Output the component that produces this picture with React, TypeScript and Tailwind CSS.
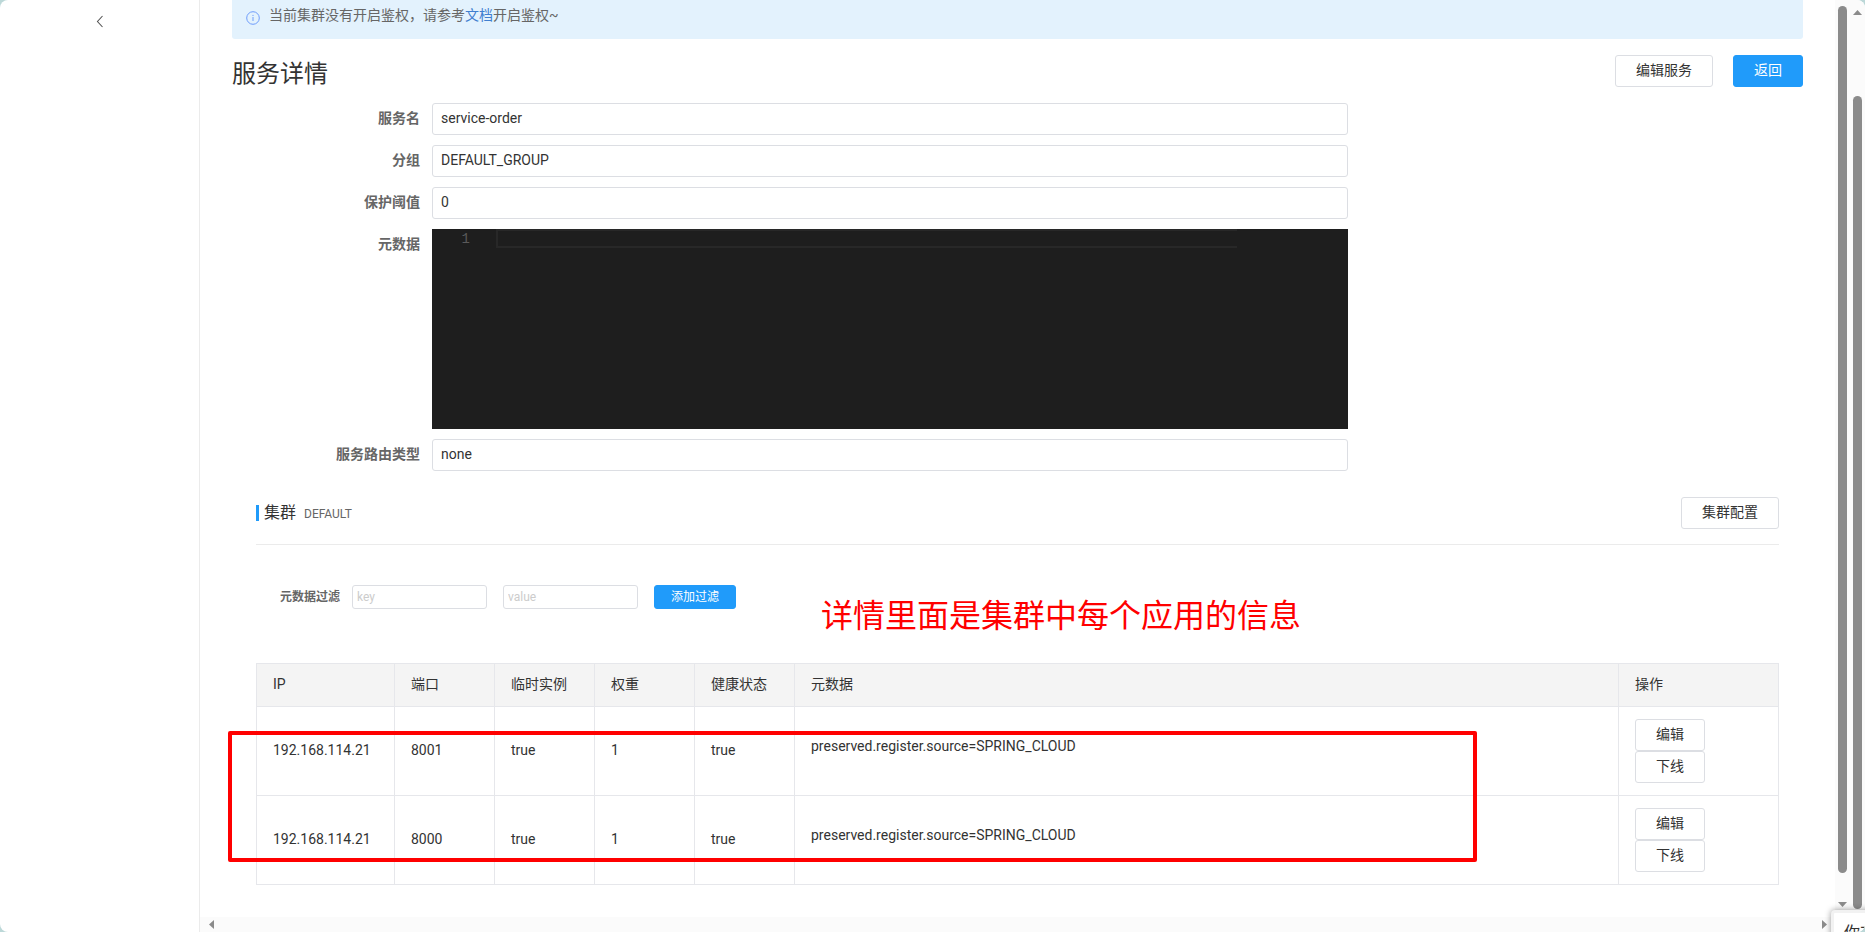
import { useState } from 'react';
import { clsx } from 'clsx';

interface Instance {
  ip: string;
  port: number;
  ephemeral: boolean;
  weight: number;
  healthy: boolean;
  metadata: string;
}

const instances: Instance[] = [
  {
    ip: '192.168.114.21',
    port: 8001,
    ephemeral: true,
    weight: 1,
    healthy: true,
    metadata: 'preserved.register.source=SPRING_CLOUD',
  },
  {
    ip: '192.168.114.21',
    port: 8000,
    ephemeral: true,
    weight: 1,
    healthy: true,
    metadata: 'preserved.register.source=SPRING_CLOUD',
  },
];

const columns = [
  { title: 'IP', width: 'w-[138px]' },
  { title: '端口', width: 'w-[100px]' },
  { title: '临时实例', width: 'w-[100px]' },
  { title: '权重', width: 'w-[100px]' },
  { title: '健康状态', width: 'w-[100px]' },
  { title: '元数据', width: '' },
  { title: '操作', width: 'w-[160px]' },
];

interface ButtonProps {
  children: string;
  primary?: boolean;
  small?: boolean;
}

function Button({ children, primary, small }: ButtonProps) {
  return (
    <button
      type="button"
      className={clsx(
        'block rounded-[3px] border whitespace-nowrap',
        small ? 'h-6 px-4 text-xs' : 'h-8 px-5 pb-0.5 text-sm',
        primary
          ? 'border-[#209bfa] bg-[#209bfa] text-white'
          : 'border-[#dcdee3] bg-white text-[#333]'
      )}
    >
      {children}
    </button>
  );
}

function Field({ id, label, value }: { id: string; label: string; value: string }) {
  return (
    <div className="flex">
      <label
        htmlFor={id}
        className="w-[200px] shrink-0 pr-3 text-right text-sm leading-[30px] font-bold text-[#666]"
      >
        {label}
      </label>
      <input
        id={id}
        readOnly
        defaultValue={value}
        className="h-8 min-w-0 flex-1 rounded-[3px] border border-[#dcdee3] px-2 pb-0.5 text-sm text-[#333] outline-none"
      />
    </div>
  );
}

function Arrow({ direction }: { direction: 'up' | 'down' | 'left' | 'right' }) {
  const points = {
    up: '0,5 9,5 4.5,0',
    down: '0,0 9,0 4.5,5',
    left: '5,0 5,9 0,4.5',
    right: '0,0 0,9 5,4.5',
  };
  const vertical = direction === 'up' || direction === 'down';
  return (
    <svg width={vertical ? 9 : 5} height={vertical ? 5 : 9} className="block fill-[#8b8b8b]">
      <polygon points={points[direction]} />
    </svg>
  );
}

function Sidebar() {
  return (
    <aside className="w-[200px] shrink-0 border-r border-[#ebebeb] pt-[15px]">
      <button type="button" aria-label="返回列表" className="mx-auto block">
        <svg width="8" height="13" viewBox="0 0 8 13" fill="none" className="block">
          <path d="M6.5 1 1.5 6.5l5 5.5" stroke="#555" strokeWidth="1.1" />
        </svg>
      </button>
    </aside>
  );
}

function Notice() {
  return (
    <div className="flex h-[39px] gap-[9px] rounded-b-[3px] bg-[#e3f2fd] pl-[14px] text-sm text-[#666]">
      <svg width="14" height="14" viewBox="0 0 14 14" fill="none" className="mt-[11px]">
        <circle cx="7" cy="7" r="6.3" stroke="#6f9dfb" />
        <path d="M7 6v4M7 3.9v1.1" stroke="#6f9dfb" />
      </svg>
      <p className="leading-[30px]">
        当前集群没有开启鉴权，请参考
        <a href="#auth" className="text-[#3f7fd0]">
          文档
        </a>
        开启鉴权~
      </p>
    </div>
  );
}

function MetadataEditor() {
  return (
    <div className="flex">
      <span className="w-[200px] shrink-0 pr-3 text-right text-sm leading-[30px] font-bold text-[#666]">
        元数据
      </span>
      <div className="flex h-[200px] flex-1 bg-[#1e1e1e]">
        <span className="w-[38px] text-right font-['Liberation_Mono',monospace] text-sm leading-[21px] text-[#5a5a5a]">
          1
        </span>
        <div className="mr-[111px] ml-[26px] h-[19px] flex-1 border-2 border-r-0 border-[#282828]" />
      </div>
    </div>
  );
}

function InstanceTable() {
  const cell = 'border-r border-b border-[#e6e7eb] px-4';
  return (
    <table className="w-full table-fixed border-separate border-spacing-0 border-t border-l border-[#e6e7eb] text-sm text-[#333]">
      <thead className="bg-[#f4f4f4]">
        <tr className="h-[43px]">
          {columns.map((column) => (
            <th key={column.title} className={clsx(cell, column.width, 'pb-0.5 text-left font-normal')}>
              {column.title}
            </th>
          ))}
        </tr>
      </thead>
      <tbody>
        {instances.map((item) => (
          <tr key={item.port} className="h-[89px]">
            <td className={clsx(cell, 'pb-0.5')}>{item.ip}</td>
            <td className={clsx(cell, 'pb-0.5')}>{item.port}</td>
            <td className={clsx(cell, 'pb-0.5')}>{String(item.ephemeral)}</td>
            <td className={clsx(cell, 'pb-0.5')}>{item.weight}</td>
            <td className={clsx(cell, 'pb-0.5')}>{String(item.healthy)}</td>
            <td className={clsx(cell, 'pb-2.5')}>{item.metadata}</td>
            <td className={cell}>
              <Button>编辑</Button>
              <Button>下线</Button>
            </td>
          </tr>
        ))}
      </tbody>
    </table>
  );
}

function Cluster() {
  const [key, setKey] = useState('');
  const [value, setValue] = useState('');
  const filterInput =
    'h-6 w-[135px] rounded-[3px] border border-[#dcdee3] px-1 text-xs text-[#333] outline-none placeholder:text-[#ccc]';

  return (
    <section className="relative mx-6 mt-[26px]">
      <div className="flex items-center border-b border-[#ebebeb] pb-[15px]">
        <span className="h-4 w-[3px] bg-[#209bfa]" />
        <h2 className="ml-[5px] text-base leading-6 text-[#333]">集群</h2>
        <span className="ml-2 pt-0.5 text-xs text-[#666]">DEFAULT</span>
        <div className="ml-auto">
          <Button>集群配置</Button>
        </div>
      </div>

      <form className="mt-10 flex items-center pl-6">
        <label htmlFor="meta-key" className="mr-3 text-xs font-bold text-[#666]">
          元数据过滤
        </label>
        <input
          id="meta-key"
          placeholder="key"
          value={key}
          onChange={(e) => setKey(e.target.value)}
          className={filterInput}
        />
        <input
          aria-label="value"
          placeholder="value"
          value={value}
          onChange={(e) => setValue(e.target.value)}
          className={clsx(filterInput, 'mx-4')}
        />
        <Button primary small>
          添加过滤
        </Button>
      </form>

      <div className="mt-[54px]">
        <InstanceTable />
      </div>

      {/* Annotations */}
      <p className="absolute top-[95px] left-[565px] text-[32px] leading-[48px] whitespace-nowrap text-[#f00]">
        详情里面是集群中每个应用的信息
      </p>
      <div className="pointer-events-none absolute top-[234px] right-[302px] -left-7 h-[131px] rounded-[2px] border-4 border-[#f00]" />
    </section>
  );
}

export default function App() {
  return (
    <div className="h-screen overflow-hidden bg-[#bcd8d8]">
      <div className="relative flex h-full overflow-hidden rounded-lg bg-white font-['Roboto','Noto_Sans_CJK_SC',sans-serif]">
        <Sidebar />

        <div className="flex min-w-0 flex-1 flex-col">
          <main className="min-h-0 flex-1 overflow-hidden pr-8 pl-8">
            <Notice />
            <div className="mt-4 flex items-start gap-5">
              <h1 className="mr-auto text-2xl leading-[38px] text-[#333]">服务详情</h1>
              <Button>编辑服务</Button>
              <Button primary>返回</Button>
            </div>
            <div className="mt-2.5 mr-[455px] flex flex-col gap-2.5">
              <Field id="service-name" label="服务名" value="service-order" />
              <Field id="group-name" label="分组" value="DEFAULT_GROUP" />
              <Field id="threshold" label="保护阈值" value="0" />
              <MetadataEditor />
              <Field id="selector" label="服务路由类型" value="none" />
            </div>
            <Cluster />
          </main>
          <div className="flex h-[15px] items-center justify-between bg-[#fbfbfb] pr-2 pl-[9px]">
            <Arrow direction="left" />
            <Arrow direction="right" />
          </div>
        </div>

        {/* Inner scrollbar */}
        <div className="flex w-[15px] flex-col items-center bg-[#fbfbfb] pt-1.5 pb-[25px]">
          <div className="mb-[29px] w-[9px] flex-1 rounded-full bg-[#8b8b8b]" />
          <Arrow direction="down" />
        </div>

        {/* Outer scrollbar */}
        <div className="flex w-[15px] flex-col items-center bg-[#fbfbfb] pt-2.5 pb-[23px]">
          <Arrow direction="up" />
          <div className="mt-[81px] w-[9px] flex-1 rounded-full bg-[#8b8b8b]" />
        </div>

        {/* Toast clipped by the window corner */}
        <div className="absolute top-[910px] left-[calc(100%-34px)] w-40 rounded-[4px] border-[3px] border-[#f2f2f2] bg-white pt-2 pl-2.5 text-base leading-6 whitespace-nowrap text-[#333] shadow-[0_0_6px_rgba(0,0,0,0.4)]">
          你在
        </div>
      </div>
    </div>
  );
}
